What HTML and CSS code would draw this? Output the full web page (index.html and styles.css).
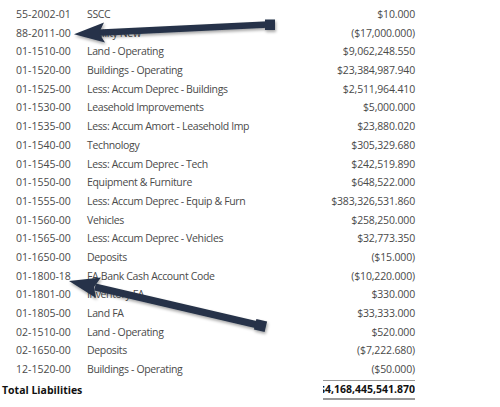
FILE: index.html
```html
<!DOCTYPE html>
<html>
<head>
<meta charset="utf-8">
<link rel="stylesheet" href="styles.css">
</head>
<body>
<div class="page">
  <div class="report">
    <div class="row"><span class="code">55-2002-01</span><span class="desc">SSCC</span><span class="amt">$10.000</span></div>
    <div class="row"><span class="code">88-2011-00</span><span class="desc">Facility New</span><span class="amt">($17,000.000)</span></div>
    <div class="row"><span class="code">01-1510-00</span><span class="desc">Land - Operating</span><span class="amt">$9,062,248.550</span></div>
    <div class="row"><span class="code">01-1520-00</span><span class="desc">Buildings - Operating</span><span class="amt">$23,384,987.940</span></div>
    <div class="row"><span class="code">01-1525-00</span><span class="desc">Less: Accum Deprec - Buildings</span><span class="amt">$2,511,964.410</span></div>
    <div class="row"><span class="code">01-1530-00</span><span class="desc">Leasehold Improvements</span><span class="amt">$5,000.000</span></div>
    <div class="row"><span class="code">01-1535-00</span><span class="desc">Less: Accum Amort - Leasehold Imp</span><span class="amt">$23,880.020</span></div>
    <div class="row"><span class="code">01-1540-00</span><span class="desc">Technology</span><span class="amt">$305,329.680</span></div>
    <div class="row"><span class="code">01-1545-00</span><span class="desc">Less: Accum Deprec - Tech</span><span class="amt">$242,519.890</span></div>
    <div class="row"><span class="code">01-1550-00</span><span class="desc">Equipment &amp; Furniture</span><span class="amt">$648,522.000</span></div>
    <div class="row"><span class="code">01-1555-00</span><span class="desc">Less: Accum Deprec - Equip &amp; Furn</span><span class="amt">$383,326,531.860</span></div>
    <div class="row"><span class="code">01-1560-00</span><span class="desc">Vehicles</span><span class="amt">$258,250.000</span></div>
    <div class="row"><span class="code">01-1565-00</span><span class="desc">Less: Accum Deprec - Vehicles</span><span class="amt">$32,773.350</span></div>
    <div class="row"><span class="code">01-1650-00</span><span class="desc">Deposits</span><span class="amt">($15.000)</span></div>
    <div class="row"><span class="code">01-1800-18</span><span class="desc">FA Bank Cash Account Code</span><span class="amt">($10,220.000)</span></div>
    <div class="row"><span class="code">01-1801-00</span><span class="desc">Inventory FA</span><span class="amt">$330.000</span></div>
    <div class="row"><span class="code">01-1805-00</span><span class="desc">Land FA</span><span class="amt">$33,333.000</span></div>
    <div class="row"><span class="code">02-1510-00</span><span class="desc">Land - Operating</span><span class="amt">$520.000</span></div>
    <div class="row"><span class="code">02-1650-00</span><span class="desc">Deposits</span><span class="amt">($7,222.680)</span></div>
    <div class="row"><span class="code">12-1520-00</span><span class="desc">Buildings - Operating</span><span class="amt">($50.000)</span></div>
    <div class="total">
      <span class="total-label">Total Liabilities</span>
      <span class="total-amt"><span>$4,168,445,541.870</span></span>
    </div>
  </div>

  <svg class="arrows" width="500" height="407" viewBox="0 0 500 407">
    <defs>
      <filter id="sh" x="-10%" y="-50%" width="120%" height="200%">
        <feDropShadow dx="1" dy="2" stdDeviation="1.5" flood-color="#000" flood-opacity="0.35"/>
      </filter>
    </defs>
    <g fill="#263348" stroke="#263348" filter="url(#sh)">
      <line x1="98" y1="32.8" x2="268" y2="24.6" stroke-width="6.5"/>
      <rect x="265" y="19.5" width="10" height="10.5" stroke="none"/>
      <polygon points="74,34.2 104,22.4 99,33 105,42.6" stroke="none"/>
    </g>
    <g fill="#263348" stroke="#263348" filter="url(#sh)">
      <line x1="95" y1="287" x2="260" y2="325.5" stroke-width="7"/>
      <rect x="255" y="320" width="11" height="11" stroke="none" transform="rotate(13 260.5 325.5)"/>
      <polygon points="69,281 101,277.5 94,287 96,298" stroke="none"/>
    </g>
  </svg>
</div>
</body>
</html>
```

FILE: styles.css
```css
html, body {
  margin: 0;
  padding: 0;
  background: #ffffff;
}

.page {
  position: relative;
  width: 500px;
  height: 407px;
  overflow: hidden;
  font-family: "Open Sans", "Noto Sans", sans-serif;
  font-size: 10.5px;
  color: #4a4a4a;
}

.report {
  width: 415px;
  padding-top: 5px;
}

.row {
  display: grid;
  grid-template-columns: 71px 1fr auto;
  padding-left: 16px;
  height: 18.7px;
  line-height: 18.7px;
  white-space: nowrap;
}

.desc {
  letter-spacing: -0.35px;
}

.amt {
  text-align: right;
  letter-spacing: -0.15px;
}

.total {
  display: grid;
  grid-template-columns: 1fr 92px;
  align-items: center;
  margin-top: 1px;
  height: 20px;
}

.total-label {
  padding-left: 2px;
  font-weight: 700;
  color: #111;
}

.total-amt {
  display: flex;
  justify-content: flex-end;
  overflow: hidden;
  font-weight: 700;
  color: #111;
  border-top: 1px solid #999;
  border-bottom: 2px solid #999;
  line-height: 17px;
  white-space: nowrap;
}

.arrows {
  position: absolute;
  left: 0;
  top: 0;
}
```
